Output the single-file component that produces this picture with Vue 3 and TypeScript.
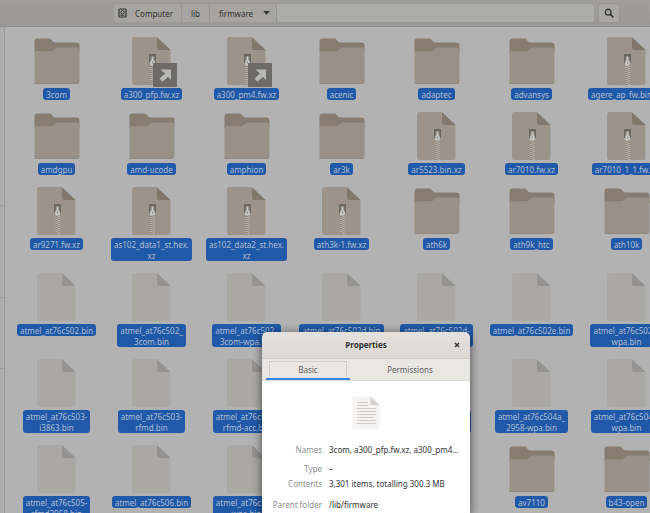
<script setup lang="ts">
type Kind = 'folder' | 'archive' | 'binary'

interface Entry {
  kind: Kind
  lines: string[]
  link?: boolean
}

const folder = (name: string): Entry => ({ kind: 'folder', lines: [name] })
const archive = (...lines: string[]): Entry => ({ kind: 'archive', lines })
const binary = (...lines: string[]): Entry => ({ kind: 'binary', lines })

const entries: Entry[] = [
  folder('3com'),
  { kind: 'archive', lines: ['a300_pfp.fw.xz'], link: true },
  { kind: 'archive', lines: ['a300_pm4.fw.xz'], link: true },
  folder('acenic'),
  folder('adaptec'),
  folder('advansys'),
  archive('agere_ap_fw.bin.xz'),

  folder('amdgpu'),
  folder('amd-ucode'),
  folder('amphion'),
  folder('ar3k'),
  archive('ar5523.bin.xz'),
  archive('ar7010.fw.xz'),
  archive('ar7010_1_1.fw.xz'),

  archive('ar9271.fw.xz'),
  archive('as102_data1_st.hex.', 'xz'),
  archive('as102_data2_st.hex.', 'xz'),
  archive('ath3k-1.fw.xz'),
  folder('ath6k'),
  folder('ath9k_htc'),
  folder('ath10k'),

  binary('atmel_at76c502.bin'),
  binary('atmel_at76c502_', '3com.bin'),
  binary('atmel_at76c502_', '3com-wpa.bin'),
  binary('atmel_at76c502d.bin'),
  binary('atmel_at76c502d-', 'wpa.bin'),
  binary('atmel_at76c502e.bin'),
  binary('atmel_at76c502e-', 'wpa.bin'),

  binary('atmel_at76c503-', 'i3863.bin'),
  binary('atmel_at76c503-', 'rfmd.bin'),
  binary('atmel_at76c503-', 'rfmd-acc.bin'),
  binary('atmel_at76c504.bin'),
  binary('atmel_at76c504_', '2958-wpa.bin'),
  binary('atmel_at76c504a_', '2958-wpa.bin'),
  binary('atmel_at76c504c-', 'wpa.bin'),

  binary('atmel_at76c505-', 'rfmd2958.bin'),
  binary('atmel_at76c506.bin'),
  binary('atmel_at76c50x-', 'wpa.bin'),
  binary('atusb.bin'),
  folder('atusb'),
  folder('av7110'),
  folder('b43-open'),
]

const properties = [
  { label: 'Names', value: '3com, a300_pfp.fw.xz, a300_pm4.fw.xz, acenic' },
  { label: 'Type', value: '–' },
  { label: 'Contents', value: '3,301 items, totalling 300.3 MB' },
  { label: 'Parent folder', value: '/lib/firmware' },
]
</script>

<template>
  <div class="window">
    <header class="headerbar">
      <nav class="pathbar" aria-label="Location">
        <button class="crumb" type="button">
          <svg class="disk" viewBox="0 0 9 10" width="9" height="10" aria-hidden="true">
            <rect x="1" y="1" width="7" height="8" rx="0.8" fill="none" stroke="currentColor" stroke-width="1.2" />
            <circle cx="4.6" cy="4.3" r="1.8" fill="none" stroke="currentColor" stroke-width="0.9" />
            <path d="M4.6 4.3 2.6 6.9M2.4 7.5h4" stroke="currentColor" stroke-width="0.7" />
          </svg>
          <span>Computer</span>
        </button>
        <button class="crumb" type="button">lib</button>
        <button class="crumb" type="button">
          <span>firmware</span>
          <svg viewBox="0 0 7 4" width="7" height="4" aria-hidden="true">
            <path d="M0.3 0h6.4L3.5 3.8z" fill="currentColor" />
          </svg>
        </button>
      </nav>
      <button class="search" type="button" aria-label="Search">
        <svg viewBox="0 0 10 10" width="10" height="10" aria-hidden="true">
          <circle cx="4.2" cy="4.2" r="2.9" fill="none" stroke="currentColor" stroke-width="1.4" />
          <path d="M6.3 6.3 9 9" stroke="currentColor" stroke-width="1.7" stroke-linecap="round" />
        </svg>
      </button>
    </header>

    <div class="body">
      <aside class="sidebar">
        <div class="section"></div>
        <div class="section"></div>
        <div class="section"></div>
      </aside>
      <main class="files">
        <div v-for="(entry, i) in entries" :key="i" class="file">
          <div class="icon">
            <svg v-if="entry.kind === 'folder'" viewBox="0 0 48 48" width="48" height="48" aria-hidden="true">
              <path d="M1.5 14V4.5Q1.5 1.5 4.5 1.5h11.500q1.600 0 2.600 1.200l1.600 1.800q.9.9 2.200.9h21.100q3 0 3 3V16H1.500z" fill="#877c70" />
              <path d="M1.500 14.300h16.500q1.500 0 2.500-1l2.100-1.900q.9-.9 2.300-.9h18.600q3 0 3 3v30.500q0 3-3 3H1.500z" fill="#999187" />
              <path d="M1.500 46.500h42q1.500 0 2.500-1" fill="none" stroke="#91887e" stroke-width="1" />
            </svg>
            <svg v-else viewBox="1 0 48 48" width="48" height="48" :class="entry.kind" aria-hidden="true">
              <path class="sheet" d="M7.500 0H29.500L43.500 13v32.500q0 2.500-2.500 2.500H7.500Q5 48 5 45.500v-43Q5 0 7.500 0z" />
              <path class="fold" d="M30 .3 43.500 13H32.500Q30 13 30 10.500z" />
              <g v-if="entry.kind === 'archive'">
                <path d="M24.500 28v20" stroke="#b5b1ab" stroke-width="2" stroke-dasharray="1 1" />
                <path d="M26.500 29v19" stroke="#b5b1ab" stroke-width="2" stroke-dasharray="1 1" />
                <path d="M24.500 29v19" stroke="#8b847b" stroke-width="2" stroke-dasharray="1 1" />
                <path d="M22 26v-9h7v9h-1.500v-6h-4v6z" fill="#6a6761" />
                <path d="M23.500 19h4v7h-4z" fill="#77736d" />
                <path d="M24.500 19.500h2v3.500l1.300 1.500v2.500q0 1.300-1.300 1.300h-2q-1.300 0-1.300-1.300v-2.500l1.300-1.500z" fill="#c9c7c3" />
                <path d="M25.500 24.500v2" stroke="#8b8782" stroke-width="1" />
              </g>
            </svg>
            <svg v-if="entry.link" class="emblem" viewBox="0 0 24 24" width="24" height="24" aria-hidden="true">
              <rect width="24" height="24" rx="1" fill="#6c6b69" />
              <path d="M7.500 6.500h10.500v10.500l-3-3.300-5.500 5-3-3 5.500-5.200z" fill="#b8b8b7" />
            </svg>
          </div>
          <div class="name">
            <div v-for="line in entry.lines" :key="line">{{ line }}</div>
          </div>
        </div>
      </main>
    </div>

    <section class="dialog" role="dialog" aria-labelledby="dialog-title">
      <div class="titlebar">
        <h1 id="dialog-title">Properties</h1>
        <button class="close" type="button" aria-label="Close">
          <svg viewBox="0 0 6 6" width="6" height="6" aria-hidden="true">
            <path d="M1 1l4 4M5 1 1 5" stroke="currentColor" stroke-width="1.400" />
          </svg>
        </button>
      </div>
      <div class="tabs" role="tablist">
        <button class="tab active" type="button" role="tab" aria-selected="true"><span>Basic</span></button>
        <button class="tab" type="button" role="tab" aria-selected="false"><span>Permissions</span></button>
      </div>
      <div class="page">
        <svg class="preview" viewBox="0 0 28 34" width="28" height="34" aria-hidden="true">
          <path d="M2 .5h16.500l9 8.500v23q0 1.500-1.500 1.500H2Q.5 33.500.5 32V2Q.5.5 2 .5z" fill="#f4f3f2" />
          <path d="M18.500.5l9 8.500h-7.500q-1.500 0-1.500-1.500z" fill="#d3d1cf" />
          <path d="M5 6.500h11M5 9.500h11M5 12.500h19M5 15.500h19M5 18.500h19M5 21.500h17M5 24.500h19M5 27.500h19" stroke="#cfcecc" stroke-width="1" />
        </svg>
        <dl class="details">
          <template v-for="row in properties" :key="row.label">
            <dt>{{ row.label }}</dt>
            <dd>{{ row.value }}</dd>
          </template>
        </dl>
      </div>
    </section>
  </div>
</template>

<style>
body {
  margin: 0;
}
</style>

<style scoped>
.window {
  position: relative;
  display: flex;
  flex-direction: column;
  height: 100vh;
  overflow: hidden;
  background: #b2b2b2;
  color: #303231;
  font-family: "Noto Sans", "Open Sans", sans-serif;
  font-size: 8px;
}

button {
  margin: 0;
  padding: 0;
  border: 0;
  background: none;
  color: inherit;
  font: inherit;
}

svg {
  display: block;
}

.headerbar {
  display: flex;
  flex: none;
  gap: 5px;
  box-sizing: border-box;
  height: 27px;
  padding: 4px 31px 4px 114px;
  border-bottom: 1px solid #918f8d;
  background: linear-gradient(#a09f9c, #9a9895);
}

.pathbar {
  display: flex;
  flex: 1;
  border-radius: 3px;
  background: #acacaa;
  box-shadow: 0 0 0 1px #9b9997;
}

.crumb {
  display: flex;
  align-items: center;
  gap: 8px;
  padding: 0 9px;
  border-right: 1px solid #989693;
  background: #a7a5a2;
}

.crumb:first-child {
  padding: 0 8px 0 4px;
  border-radius: 3px 0 0 3px;
}

.crumb:last-child {
  gap: 10px;
  padding-right: 6px;
}

.search {
  display: grid;
  place-items: center;
  width: 20px;
  border-radius: 3px;
  background: #aba9a7;
  box-shadow: 0 0 0 1px #989693;
}

.body {
  display: flex;
  flex: 1;
  min-height: 0;
}

.sidebar {
  flex: none;
  width: 4px;
  border-right: 1px solid #9c9b9a;
  background: #afaeae;
}

.section {
  box-sizing: border-box;
  height: 71px;
  border-bottom: 1px solid #a09f9e;
}

.section:first-child {
  height: 179px;
}

.section:nth-child(2) {
  height: 92px;
}

.files {
  display: grid;
  grid-template-columns: repeat(7, 95px);
  align-content: start;
  row-gap: 12px;
  padding: 10px 4px;
}

.file {
  display: flex;
  flex-direction: column;
  align-items: center;
  gap: 3px;
}

.icon {
  position: relative;
}

.archive .sheet {
  fill: #9c948a;
}

.archive .fold {
  fill: #81776b;
}

.binary .sheet {
  fill: #a9a8a5;
}

.binary .fold {
  fill: #949391;
}

.emblem {
  position: absolute;
  right: -1px;
  bottom: -2px;
}

.name {
  padding: 1px 3px 0;
  border-radius: 3px;
  background: #2059a8;
  color: #b0bed1;
  line-height: 11px;
  text-align: center;
  white-space: nowrap;
}

.dialog {
  position: absolute;
  top: 332px;
  bottom: 0;
  left: 262px;
  width: 208px;
  border-radius: 6px 6px 0 0;
  background: #fff;
  box-shadow: 0 2px 8px 1px rgba(0, 0, 0, 0.5);
  overflow: hidden;
}

.titlebar {
  display: grid;
  grid-template-columns: 26px 1fr 26px;
  align-items: center;
  height: 26px;
  border-bottom: 1px solid #cdc9c5;
  background: linear-gradient(#e3e0dd, #dcd8d4);
}

.titlebar h1 {
  grid-column: 2;
  margin: 0;
  font-size: 8px;
  font-weight: 700;
  line-height: 12px;
  text-align: center;
}

.close {
  display: grid;
  place-items: center;
  height: 20px;
}

.tabs {
  display: grid;
  grid-template-columns: 84px 1fr;
  padding-left: 4px;
  height: 21px;
  border-bottom: 1px solid #dedbd8;
  background: #e9e7e4;
  color: #5c5e5e;
}

.tab {
  display: grid;
  padding: 2px 3px 0;
  border-bottom: 2px solid transparent;
}

.tab span {
  display: grid;
  place-items: center;
  box-sizing: border-box;
  border: 1px solid transparent;
}

.tab.active {
  border-bottom-color: #3584e4;
}

.tab.active span {
  border-color: #d0ccc8;
  border-bottom-color: transparent;
}

.page {
  padding: 15px 9px 0;
}

.preview {
  margin: 0 auto;
}

.details {
  display: grid;
  grid-template-columns: 51px minmax(0, 1fr);
  grid-template-rows: 19px 15px 21px 12px;
  column-gap: 7px;
  margin: 14px 2px 0 0;
  line-height: 12px;
}

.details dt {
  color: #8b8e8f;
  text-align: right;
  white-space: nowrap;
}

.details dd {
  margin: 0;
  overflow: hidden;
  text-overflow: ellipsis;
  white-space: nowrap;
}
</style>
